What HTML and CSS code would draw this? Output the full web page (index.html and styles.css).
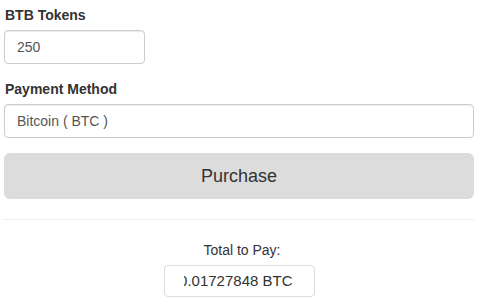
FILE: index.html
```html
<!DOCTYPE html>
<html lang="en">
<head>
  <meta charset="UTF-8">
  <title>Buy BTB Tokens</title>
  <link rel="stylesheet" href="styles.css">
</head>
<body>
<div class="container">
  <div class="form-group">
    <label for="tokens">BTB Tokens</label>
    <input type="text" id="tokens" class="form-control short" value="250">
  </div>
  <div class="form-group">
    <label for="method">Payment Method</label>
    <input type="text" id="method" class="form-control" value="Bitcoin ( BTC )">
  </div>
  <button class="btn">Purchase</button>
  <hr>
  <div class="total">
    <p>Total to Pay:</p>
    <div class="total-box"><div class="total-value"><span>0.01727848 BTC</span></div></div>
  </div>
</div>
</body>
</html>
```

FILE: styles.css
```css
body {
  margin: 0;
  font-family: "Liberation Sans", Arial, sans-serif;
  font-size: 14px;
  line-height: 20px;
  color: #333;
  background: #fff;
}
.container {
  width: 470px;
  padding: 5px 0 0 4px;
}
.form-group {
  margin-bottom: 15px;
}
label {
  display: block;
  font-weight: bold;
  margin-bottom: 5px;
  padding-left: 1px;
}
.form-control {
  display: block;
  box-sizing: border-box;
  width: 100%;
  height: 34px;
  padding: 6px 12px;
  font: inherit;
  color: #555;
  border: 1px solid #ccc;
  border-radius: 4px;
  box-shadow: inset 0 1px 1px rgba(0, 0, 0, 0.075);
  outline: none;
}
.form-control.short {
  width: 141px;
}
.btn {
  display: block;
  width: 100%;
  height: 46px;
  font-family: inherit;
  font-size: 18px;
  color: #333;
  background: #dcdcdc;
  border: none;
  border-radius: 6px;
}
hr {
  margin: 20px 0;
  border: 0;
  border-top: 1px solid #eee;
}
.total {
  text-align: center;
}
.total p {
  margin: 0 0 5px 6px;
}
.total-box {
  display: inline-block;
  box-sizing: border-box;
  width: 151px;
  height: 32px;
  padding: 5px 21px 5px 19px;
  border: 1px solid #ddd;
  border-radius: 4px;
}
.total-value {
  display: flex;
  justify-content: flex-end;
  overflow: hidden;
  font-size: 15px;
  white-space: nowrap;
}
```
